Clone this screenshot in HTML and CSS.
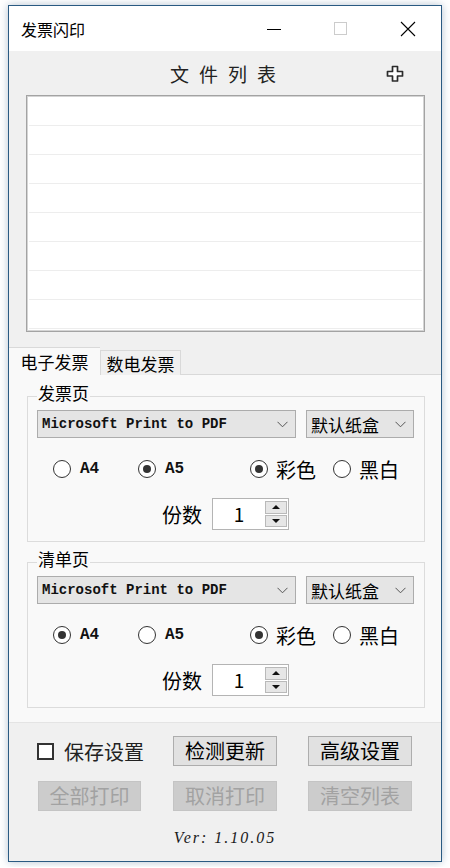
FILE: index.html
```html
<!DOCTYPE html>
<html lang="zh-CN">
<head>
    <meta charset="UTF-8">
    <meta name="viewport" content="width=device-width, initial-scale=1.0">
    <title>发票闪印</title>
    <link rel="stylesheet" href="styles.css">
</head>
<body>
    <div class="window">
        <div class="titlebar">
            <span class="title">发票闪印</span>
            <span class="cap">
                <svg width="16" height="16" viewBox="0 0 16 16"><path d="M1 8.5h14" stroke="#000" stroke-width="1"/></svg>
            </span>
            <span class="cap">
                <svg width="15" height="15" viewBox="0 0 15 15"><rect x="1.5" y="1.5" width="12" height="12" fill="none" stroke="#cccccc" stroke-width="1"/></svg>
            </span>
            <span class="cap">
                <svg width="16" height="16" viewBox="0 0 16 16"><path d="M1 1L15 15M15 1L1 15" stroke="#000" stroke-width="1.1"/></svg>
            </span>
        </div>

        <div class="client">
            <div class="list-head">
                <span></span>
                <h2>文件列表</h2>
                <button class="add-btn" title="添加文件">
                    <svg width="18" height="17" viewBox="0 0 18 17"><path d="M6.5 1.5h5v5h5v4.5h-5v5h-5v-5h-5v-4.5h5z" fill="#fff" stroke="#2b2b2b" stroke-width="1.7" stroke-linejoin="round"/></svg>
                </button>
            </div>

            <ul class="file-list">
                <li></li><li></li><li></li><li></li>
                <li></li><li></li><li></li><li></li>
            </ul>

            <div class="tabs">
                <div class="tab active">电子发票</div>
                <div class="tab">数电发票</div>
            </div>

            <div class="tab-page">
                <fieldset class="group">
                    <legend>发票页</legend>
                    <div class="printer-row">
                        <div class="combo combo-printer">
                            <span class="mono">Microsoft Print to PDF</span>
                            <svg class="chevron" width="11" height="7" viewBox="0 0 11 7"><path d="M0.5 0.8L5.5 5.8L10.5 0.8" fill="none" stroke="#555" stroke-width="1"/></svg>
                        </div>
                        <div class="combo combo-tray">
                            <span>默认纸盒</span>
                            <svg class="chevron" width="11" height="7" viewBox="0 0 11 7"><path d="M0.5 0.8L5.5 5.8L10.5 0.8" fill="none" stroke="#555" stroke-width="1"/></svg>
                        </div>
                    </div>
                    <div class="radio-row">
                        <label class="radio"><span class="circle"></span><span class="mono">A4</span></label>
                        <label class="radio"><span class="circle checked"></span><span class="mono">A5</span></label>
                        <label class="radio"><span class="circle checked"></span><span>彩色</span></label>
                        <label class="radio"><span class="circle"></span><span>黑白</span></label>
                    </div>
                    <div class="copies-row">
                        <span>份数</span>
                        <div class="spin">
                            <span class="spin-value">1</span>
                            <div class="spin-btns">
                                <span class="spin-btn"><span class="arrow-up"></span></span>
                                <span class="spin-btn"><span class="arrow-down"></span></span>
                            </div>
                        </div>
                    </div>
                </fieldset>

                <fieldset class="group">
                    <legend>清单页</legend>
                    <div class="printer-row">
                        <div class="combo combo-printer">
                            <span class="mono">Microsoft Print to PDF</span>
                            <svg class="chevron" width="11" height="7" viewBox="0 0 11 7"><path d="M0.5 0.8L5.5 5.8L10.5 0.8" fill="none" stroke="#555" stroke-width="1"/></svg>
                        </div>
                        <div class="combo combo-tray">
                            <span>默认纸盒</span>
                            <svg class="chevron" width="11" height="7" viewBox="0 0 11 7"><path d="M0.5 0.8L5.5 5.8L10.5 0.8" fill="none" stroke="#555" stroke-width="1"/></svg>
                        </div>
                    </div>
                    <div class="radio-row">
                        <label class="radio"><span class="circle checked"></span><span class="mono">A4</span></label>
                        <label class="radio"><span class="circle"></span><span class="mono">A5</span></label>
                        <label class="radio"><span class="circle checked"></span><span>彩色</span></label>
                        <label class="radio"><span class="circle"></span><span>黑白</span></label>
                    </div>
                    <div class="copies-row">
                        <span>份数</span>
                        <div class="spin">
                            <span class="spin-value">1</span>
                            <div class="spin-btns">
                                <span class="spin-btn"><span class="arrow-up"></span></span>
                                <span class="spin-btn"><span class="arrow-down"></span></span>
                            </div>
                        </div>
                    </div>
                </fieldset>
            </div>

            <div class="actions">
                <label class="check"><span class="box"></span>保存设置</label>
                <button class="btn">检测更新</button>
                <button class="btn">高级设置</button>
                <button class="btn btn-first" disabled>全部打印</button>
                <button class="btn" disabled>取消打印</button>
                <button class="btn" disabled>清空列表</button>
            </div>

            <div class="version">Ver: 1.10.05</div>
        </div>
    </div>
</body>
</html>
```

FILE: styles.css
```css
* {
    box-sizing: border-box;
}

body {
    margin: 0;
    background-color: #fff;
    font-family: "Noto Sans CJK SC", sans-serif;
    color: #000;
}

.window {
    width: 434px;
    height: 857px;
    margin: 5px 8px;
    border: 1px solid #2a5a82;
    box-shadow: 0 0 8px rgba(40, 80, 120, 0.35);
    display: flex;
    flex-direction: column;
    background-color: #f0f0f0;
}

/* title bar */
.titlebar {
    height: 45px;
    flex-shrink: 0;
    display: flex;
    align-items: center;
    background-color: #fff;
}

.title {
    flex: 1;
    padding-left: 12px;
    font-size: 16px;
}

.cap {
    width: 67px;
    height: 45px;
    display: flex;
    align-items: center;
    justify-content: center;
}

/* file list */
.client {
    flex: 1;
    display: flex;
    flex-direction: column;
}

.list-head {
    height: 44px;
    display: grid;
    grid-template-columns: 1fr auto 1fr;
    align-items: center;
}

.list-head h2 {
    margin: 0;
    font-size: 19px;
    font-weight: normal;
    letter-spacing: 10px;
    padding-left: 6px;
    color: #222;
}

.add-btn {
    justify-self: end;
    margin-right: 37px;
    padding: 0;
    border: none;
    background: none;
    display: flex;
}

.file-list {
    list-style: none;
    margin: 0 16px 0 17px;
    padding: 1px 0;
    height: 237px;
    border: 1px solid #a3a3a3;
    box-shadow: inset 0 0 0 1px #d4d4d4;
    background-color: #fff;
}

.file-list li {
    height: 29px;
    margin: 0 2px;
    border-bottom: 1px solid #ededed;
}

/* tabs */
.tabs {
    display: flex;
    align-items: flex-end;
    height: 28px;
    margin-top: 15px;
    margin-bottom: -1px;
    position: relative;
    z-index: 1;
}

.tab {
    height: 25px;
    width: 81px;
    display: flex;
    align-items: center;
    justify-content: center;
    font-size: 17px;
    background-color: #f0f0f0;
    border: 1px solid #d9d9d9;
    border-bottom: none;
}

.tab.active {
    height: 28px;
    width: 91px;
    background-color: #f9f9f9;
    border-left: none;
    border-right: none;
}

.tab-page {
    background-color: #f9f9f9;
    border-top: 1px solid #d9d9d9;
    border-bottom: 1px solid #e4e4e4;
    padding: 8px 0 14px;
}

/* group boxes */
.group {
    margin: 0 16px 0 18px;
    padding: 1px 10px 11px 9px;
    border: 1px solid #dcdcdc;
    min-width: 0;
}

.group + .group {
    margin-top: 7px;
}

.group legend {
    padding: 0 1px 6px;
    font-size: 17px;
    line-height: 20px;
}

.printer-row {
    display: flex;
    justify-content: space-between;
}

.combo {
    height: 28px;
    display: flex;
    align-items: center;
    justify-content: space-between;
    padding: 0 7px 0 4px;
    background-color: #e5e5e5;
    border: 1px solid #acacac;
    font-size: 17px;
}

.combo-printer {
    width: 259px;
}

.combo-tray {
    width: 108px;
}

.mono {
    font-family: "Liberation Mono", monospace;
    font-weight: bold;
    font-size: 14px;
    color: #111;
}

.radio-row {
    display: grid;
    grid-template-columns: 85px 112px 83px auto;
    align-items: center;
    height: 30px;
    margin-top: 16px;
    padding-left: 16px;
}

.radio {
    display: flex;
    align-items: center;
    gap: 8px;
    font-size: 20px;
}

.radio .mono {
    font-size: 16px;
    margin-left: 1px;
}

.circle {
    width: 18px;
    height: 18px;
    border: 1px solid #333;
    border-radius: 50%;
    background-color: #fff;
    display: flex;
    align-items: center;
    justify-content: center;
}

.circle.checked::after {
    content: "";
    width: 8px;
    height: 8px;
    border-radius: 50%;
    background-color: #333;
}

.copies-row {
    display: flex;
    justify-content: center;
    align-items: center;
    gap: 10px;
    margin-top: 14px;
    font-size: 20px;
}

.spin {
    width: 77px;
    height: 32px;
    display: flex;
    border: 1px solid #b4b4b4;
    background-color: #fff;
}

.spin-value {
    flex: 1;
    text-align: center;
    line-height: 30px;
    font-size: 19px;
}

.spin-btns {
    width: 22px;
    margin: 2px 1px 2px 0;
    display: flex;
    flex-direction: column;
    gap: 1px;
}

.spin-btn {
    flex: 1;
    display: flex;
    align-items: center;
    justify-content: center;
    background-color: #e6e6e6;
    border: 1px solid #b9b9b9;
}

.arrow-up,
.arrow-down {
    width: 0;
    height: 0;
    border-left: 4px solid transparent;
    border-right: 4px solid transparent;
}

.arrow-up {
    border-bottom: 4px solid #111;
}

.arrow-down {
    border-top: 4px solid #111;
}

/* bottom buttons */
.actions {
    display: grid;
    grid-template-columns: 105px 105px 105px;
    column-gap: 30px;
    row-gap: 15px;
    padding: 13px 0 0 28px;
}

.check {
    display: flex;
    align-items: center;
    gap: 10px;
    font-size: 20px;
    color: #222;
    white-space: nowrap;
}

.box {
    flex-shrink: 0;
    width: 17px;
    height: 17px;
    border: 2px solid #333;
    background-color: #fff;
}

.btn {
    justify-self: end;
    width: 104px;
    height: 30px;
    padding: 0;
    font-family: "Noto Sans CJK SC", sans-serif;
    font-size: 20px;
    line-height: 1;
    color: #000;
    background-color: #e1e1e1;
    border: 1px solid #adadad;
}

.btn:disabled {
    color: #a2a2a2;
    background-color: #cccccc;
    border-color: #c4c4c4;
}

.btn-first {
    justify-self: center;
    width: 103px;
}

.version {
    margin-top: 17px;
    text-align: center;
    font-family: "Liberation Serif", serif;
    font-style: italic;
    font-size: 16px;
    letter-spacing: 2px;
    line-height: 20px;
    color: #1a1a1a;
}
```
